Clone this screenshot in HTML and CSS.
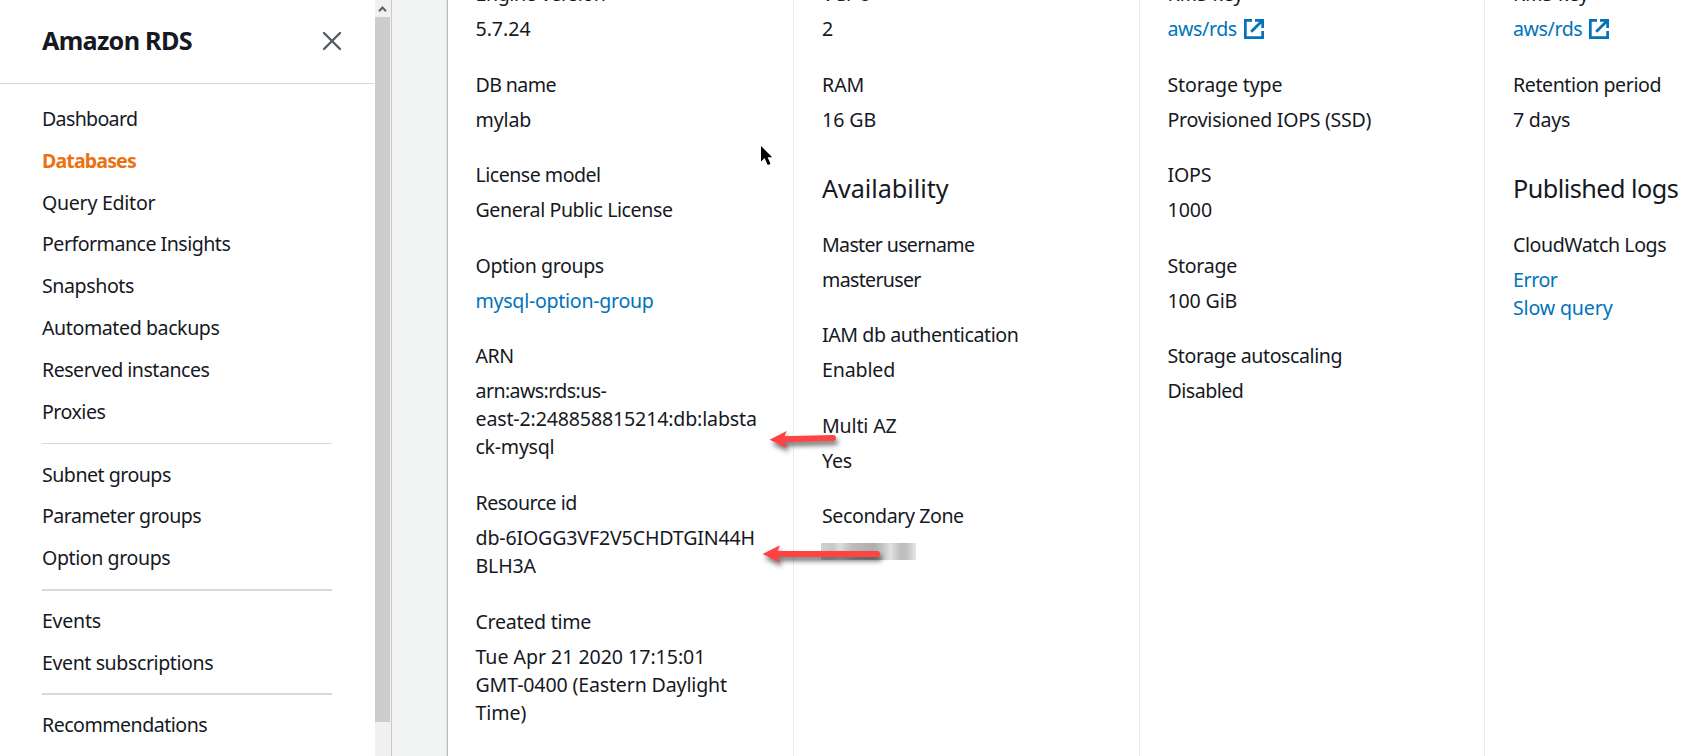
FILE: index.html
```html
<!DOCTYPE html>
<html lang="en">
<head>
<meta charset="utf-8">
<title>Amazon RDS</title>
<link rel="stylesheet" href="styles.css">
</head>
<body>
<div class="app">
  <aside class="sidebar">
    <header class="sidebar-header">
      <h1 class="service-name">Amazon RDS</h1>
      <svg class="close" viewBox="0 0 20 20"><path d="M2 2l16 16M18 2L2 18"/></svg>
    </header>
    <nav class="nav">
      <ul class="nav-group">
        <li class="t6">Dashboard</li>
        <li class="active">Databases</li>
        <li class="t2">Query Editor</li>
        <li class="t4">Performance Insights</li>
        <li class="t3">Snapshots</li>
        <li class="t3">Automated backups</li>
        <li class="t4">Reserved instances</li>
        <li class="t4">Proxies</li>
      </ul>
      <ul class="nav-group thin">
        <li class="t4">Subnet groups</li>
        <li class="t4">Parameter groups</li>
        <li class="t3">Option groups</li>
      </ul>
      <ul class="nav-group">
        <li class="t2">Events</li>
        <li class="t3">Event subscriptions</li>
      </ul>
      <ul class="nav-group">
        <li class="t4">Recommendations</li>
      </ul>
    </nav>
  </aside>
  <div class="scrollbar">
    <div class="scroll-up"><svg viewBox="0 0 15 17"><path d="M4 11.2l3.5-3.7 3.5 3.7"/></svg></div>
    <div class="scroll-thumb"></div>
  </div>
  <div class="gutter"></div>
  <main class="details">
    <section class="column">
      <dl>
        <dt class="t3">Engine version</dt><dd>5.7.24</dd>
        <dt class="t5">DB name</dt><dd class="t1">mylab</dd>
        <dt class="t4">License model</dt><dd class="t3">General Public License</dd>
        <dt class="t3">Option groups</dt><dd class="t2"><a>mysql-option-group</a></dd>
        <dt class="t3">ARN</dt><dd><span class="t5">arn:aws:rds:us-</span><br><span class="t1">east-2:248858815214:db:labsta</span><br><span class="t2">ck-mysql</span></dd>
        <dt class="t4">Resource id</dt><dd class="t1">db-6IOGG3VF2V5CHDTGIN44H<br>BLH3A</dd>
        <dt class="t2">Created time</dt><dd>Tue Apr 21 2020 17:15:01<br><span class="t1">GMT-0400 (Eastern Daylight</span><br>Time)</dd>
      </dl>
    </section>
    <section class="column">
      <dl>
        <dt>VCPU</dt><dd>2</dd>
        <dt>RAM</dt><dd>16 GB</dd>
      </dl>
      <h2>Availability</h2>
      <dl>
        <dt class="t6">Master username</dt><dd class="t6">masteruser</dd>
        <dt class="t3">IAM db authentication</dt><dd class="t1">Enabled</dd>
        <dt class="t1">Multi AZ</dt><dd class="t1">Yes</dd>
        <dt class="t3">Secondary Zone</dt><dd><div class="redacted"></div></dd>
      </dl>
    </section>
    <section class="column">
      <dl>
        <dt class="t1">KMS key</dt>
        <dd class="external"><a class="t3">aws/rds</a><svg viewBox="0 0 20 20"><path d="M8 1.3H1.3v17.4h17.4V12M7.2 12.8L17.5 2.5M11 1.3h7.7V9"/></svg></dd>
        <dt class="t1">Storage type</dt><dd class="t2">Provisioned IOPS (SSD)</dd>
        <dt class="t1">IOPS</dt><dd>1000</dd>
        <dt class="t2">Storage</dt><dd class="t1">100 GiB</dd>
        <dt class="t3">Storage autoscaling</dt><dd class="t4">Disabled</dd>
      </dl>
    </section>
    <section class="column">
      <dl>
        <dt class="t1">KMS key</dt>
        <dd class="external"><a class="t3">aws/rds</a><svg viewBox="0 0 20 20"><path d="M8 1.3H1.3v17.4h17.4V12M7.2 12.8L17.5 2.5M11 1.3h7.7V9"/></svg></dd>
        <dt class="t3">Retention period</dt><dd class="t2">7 days</dd>
      </dl>
      <h2 class="t4">Published logs</h2>
      <dl>
        <dt class="t3">CloudWatch Logs</dt><dd><a class="t3">Error</a><br><a class="t1">Slow query</a></dd>
      </dl>
    </section>
  </main>
</div>
<svg class="annotations" viewBox="0 0 1688 756">
  <g class="arrow">
    <path class="shaft" d="M783 439.3L833 438"/>
    <path d="M769.5 439.8L786.7 431l-3.4 8.4 3.9 8.6z"/>
  </g>
  <g class="arrow">
    <path class="shaft" d="M776 554H877"/>
    <path d="M762.5 554L780 545.3l-3.4 8.7 3.4 8.7z"/>
  </g>
  <path class="cursor" d="M761 146v15.5l3.6-3.4 2.8 6.4q1.8 1 3-1l-2.8-6.2h4.6z"/>
</svg>
</body>
</html>
```
FILE: styles.css
```css
* { box-sizing: border-box; }
html, body { margin: 0; height: 100%; overflow: hidden; }
body {
  font: 19.6px/28px "Noto Sans", "Open Sans", sans-serif;
  letter-spacing: -.05px;
  color: #16191f;
  background: #fff;
}
h1, h2, ul, dl, dt, dd { margin: 0; padding: 0; font-weight: 400; }
ul { list-style: none; }
a { color: #0073bb; }

/* Tracking steps */
.t1 { letter-spacing: -.16px; }
.t2 { letter-spacing: -.28px; }
.t3 { letter-spacing: -.42px; }
.t4 { letter-spacing: -.51px; }
.t5 { letter-spacing: -.6px; }
.t6 { letter-spacing: -.68px; }

.app { display: flex; height: 756px; }

.sidebar { width: 375px; flex: none; overflow: hidden; }
.sidebar-header {
  display: flex;
  justify-content: space-between;
  align-items: center;
  height: 84px;
  width: 374px;
  padding: 0 32px 2px 42px;
  border-bottom: 1px solid #d5dbdb;
}
.service-name { font-size: 25.2px; font-weight: 700; letter-spacing: -.72px; line-height: 36px; padding-bottom: 2px; }
.close { width: 20px; height: 20px; fill: none; stroke: #545b64; stroke-width: 2.4; stroke-linecap: round; }
.nav { padding: 21.1px 43px 0 42px; }
.nav-group { display: grid; row-gap: 13.8px; }
.nav-group + .nav-group { margin-top: 16.4px; padding-top: 16.2px; border-top: 2px solid #d5dbdb; }
.nav-group + .nav-group.thin { margin-top: 17px; padding-top: 17px; border-top-width: 1px; }
.active { color: #ec7211; font-weight: 700; letter-spacing: -.88px; }

.scrollbar { width: 15px; flex: none; background: #f0f0f0; }
.scroll-up { height: 17px; }
.scroll-up svg { display: block; width: 15px; height: 17px; fill: none; stroke: #606060; stroke-width: 2; }
.scroll-thumb { height: 705px; background: #cdcdcd; }

.gutter {
  width: 58px;
  flex: none;
  background: #f2f3f3;
  border-left: 1px solid #f0f0f0;
  border-right: 1px solid #b5bfc0;
  box-shadow: inset 1px 0 #c5cacb, inset -1px 0 #dfe3e3;
}

.details { flex: 1; display: grid; grid-template-columns: 345px repeat(3, 345.5px); overflow: hidden; }
.column { margin-top: -19.9px; padding-left: 28px; border-left: 1px solid #eaeded; white-space: nowrap; }
.column:first-child { padding-left: 27.5px; border-left: 0; }
dt { margin-bottom: 7px; }
dd + dt { margin-top: 27.6px; }
h2 { margin: 36.4px 0 24.5px; font-size: 25.2px; line-height: 36px; }
.external { display: flex; align-items: center; gap: 7px; }
.external svg { width: 20px; height: 20px; fill: none; stroke: #0073bb; stroke-width: 2.8; }
.redacted {
  width: 95px;
  height: 17px;
  margin: 13px 0 0 -1px;
  background: linear-gradient(90deg, #d2d2d3, #c6c7c8 12%, #dcdddf 20%, #bdbdbe 32%, #adadae 55%, #c2c2c3 64%, #dfe1e3 73%, #bcbcbd 84%, #c4c4c5 91%, #e2e5e8);
}

.annotations { position: absolute; left: 0; top: 0; width: 1688px; height: 756px; pointer-events: none; }
.arrow { fill: #ff4343; filter: drop-shadow(2px 4px 2.5px rgba(0, 0, 0, .55)); }
.shaft { stroke: #ff4343; stroke-width: 6; stroke-linecap: round; }
.cursor { fill: #000; }
```
